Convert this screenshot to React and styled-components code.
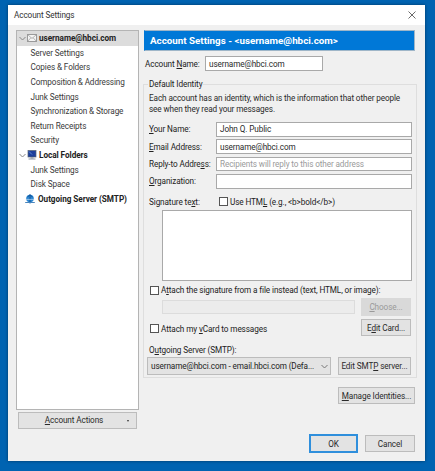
import React from 'react';
import styled, { createGlobalStyle } from 'styled-components';

const Global = createGlobalStyle`
  html, body { margin: 0; padding: 0; height: 100%; }
  body {
    background: #0063b1;
    font-family: Roboto, "Noto Sans", sans-serif;
    font-size: 8.2px;
    letter-spacing: -0.11px;
    color: #222;
    overflow: hidden;
  }
`;

const Desktop = styled.div`
  width: 435px;
  height: 471px;
  box-sizing: border-box;
  padding: 5px 10px 10px 8px;
`;

const Dialog = styled.div`
  width: 417px;
  height: 456px;
  display: flex;
  flex-direction: column;
  background: #f0f0f0;
  box-shadow: 0 0 3px rgba(0, 0, 0, 0.45);
`;

const TitleBar = styled.div`
  height: 20px;
  flex: none;
  display: flex;
  align-items: center;
  justify-content: space-between;
  padding: 0 9px 0 6px;
  background: #fff;
  color: #333;
`;

const Body = styled.div`
  flex: 1;
  display: flex;
  gap: 5px;
  padding: 5px 0 0 8px;
`;

const Side = styled.div`
  width: 123px;
  flex: none;
  display: flex;
  flex-direction: column;
`;

const Tree = styled.div`
  height: 380px;
  box-sizing: border-box;
  background: #fff;
  border: 1px solid #b4b4b4;
`;

const TreeRow = styled.div`
  height: 14.6px;
  display: flex;
  align-items: center;
  padding-left: ${p => (p.$child ? '13.5px' : '0')};
  background: ${p => (p.$selected ? '#dcdcdc' : 'transparent')};
  font-weight: ${p => (p.$root ? 700 : 400)};
  letter-spacing: ${p => (p.$root ? '-0.05px' : 'inherit')};
  color: ${p => (p.$root ? '#222' : '#3a3a3a')};
  white-space: nowrap;
`;

const Chevron = styled.svg`
  width: 7px;
  height: 5px;
  margin: 0 1px 0 2px;
  flex: none;
`;

const RootIcon = styled.svg`
  width: 10px;
  height: 10px;
  margin: ${p => (p.$flush ? '0 3px 0 8px' : '0 2px 0 0')};
  flex: none;
`;

const Button = styled.button`
  box-sizing: border-box;
  flex: none;
  padding: 0;
  width: ${p => p.$w}px;
  height: ${p => p.$h || 17}px;
  background: ${p => (p.$disabled ? '#d9d9d9' : '#e3e3e3')};
  border: 1px solid ${p => (p.$default ? '#2f8fdc' : p.$disabled ? '#d9d9d9' : '#bcbcbc')};
  outline: ${p => (p.$default ? '0.5px solid #2f8fdc' : 'none')};
  font: inherit;
  letter-spacing: inherit;
  color: ${p => (p.$disabled ? '#9a9a9a' : '#2a2a2a')};
  white-space: nowrap;
`;

const ActionsButton = styled(Button)`
  position: relative;
  margin: 2px 0 0 2px;
  padding-right: 7px;

  &::after {
    content: '';
    position: absolute;
    right: 7px;
    top: 6.5px;
    border: 1.5px solid transparent;
    border-top: 2px solid #333;
    border-bottom: 0;
  }
`;

const Main = styled.div`
  width: 273px;
  flex: none;
  display: flex;
  flex-direction: column;
`;

const Banner = styled.div`
  width: 271px;
  height: 21px;
  box-sizing: border-box;
  padding-left: 5px;
  display: flex;
  align-items: center;
  background: #0078d7;
  border: 1px solid #9fb6c8;
  border-left-color: #0078d7;
  color: #fff;
  font-size: 9.8px;
  font-weight: 700;
  letter-spacing: 0;
`;

const NameRow = styled.div`
  display: flex;
  align-items: center;
  margin: 5px 0 0 1px;
`;

const NameLabel = styled.label`
  width: 60px;
  flex: none;
`;

const Input = styled.div`
  box-sizing: border-box;
  height: ${p => p.$h || 14.6}px;
  width: ${p => (p.$w ? `${p.$w}px` : 'auto')};
  display: flex;
  align-items: center;
  padding-left: 3px;
  background: ${p => (p.$disabled ? '#ececec' : '#fff')};
  border: 1px solid ${p => (p.$disabled ? '#dcdcdc' : '#a9a9a9')};
  color: ${p => (p.$hint ? '#9a9a9a' : '#2a2a2a')};
`;

const Group = styled.fieldset`
  box-sizing: border-box;
  width: 274px;
  height: 299px;
  margin: 8px 0 0 -1px;
  padding: 0 5px 0 5px;
  border: 1px solid #dedede;
  min-width: 0;
`;

const Legend = styled.legend`
  padding: 0 1px;
  margin-left: -1px;
  line-height: 10px;
`;

const Intro = styled.p`
  margin: 4px 0 0;
  line-height: 11.3px;
  white-space: nowrap;
  color: #2a2a2a;
`;

const Fields = styled.div`
  display: grid;
  grid-template-columns: 67px 196px;
  grid-auto-rows: 14.6px;
  row-gap: 2.7px;
  align-items: center;
  margin-top: 6.5px;
  white-space: nowrap;
`;

const SigHead = styled.div`
  display: flex;
  align-items: center;
  height: 12px;
  margin-top: 7px;
`;

const SigLabel = styled.span`
  width: 70px;
  flex: none;
`;

const Check = styled.span`
  width: 9px;
  height: 9px;
  box-sizing: border-box;
  flex: none;
  margin-right: 2px;
  background: #fff;
  border: 1px solid #555;
`;

const SigBox = styled.div`
  box-sizing: border-box;
  width: 250px;
  height: 71px;
  margin: 2.5px 0 0 13px;
  background: #fff;
  border: 1px solid #a9a9a9;
`;

const CheckRow = styled.div`
  display: flex;
  align-items: center;
  height: 12px;
  margin: 3px 0 0 1px;
`;

const FileRow = styled.div`
  display: flex;
  align-items: center;
  justify-content: space-between;
  width: 249px;
  margin: 2px 0 0 13px;
`;

const CardRow = styled.div`
  display: flex;
  align-items: center;
  justify-content: space-between;
  width: 261px;
  margin: 3px 0 0 1px;
  height: 17px;
`;

const CardCheck = styled.div`
  display: flex;
  align-items: center;
  margin-top: 2px;
`;

const ServerLabel = styled.div`
  margin-top: 8px;
  height: 12px;
  line-height: 12px;
`;

const ServerRow = styled.div`
  display: flex;
  align-items: center;
  justify-content: space-between;
  width: 264px;
  margin: 1px 0 0 -2px;
`;

const Select = styled.div`
  box-sizing: border-box;
  width: 184px;
  height: 18px;
  display: flex;
  align-items: center;
  justify-content: space-between;
  padding: 0 1px 0 3px;
  background: #e3e3e3;
  border: 1px solid #bcbcbc;
  white-space: nowrap;
`;

const ManageRow = styled.div`
  display: flex;
  justify-content: flex-end;
  width: 271px;
  margin-top: 9px;
`;

const Footer = styled.div`
  display: flex;
  justify-content: flex-end;
  gap: 8px;
  width: 271px;
  margin-top: 31px;
`;

const K = styled.span`
  text-decoration: underline;
`;

const Arrow = () => (
  <Chevron viewBox="0 0 7 5"><path d="M.5 1l3 3 3-3" fill="none" stroke="#888" /></Chevron>
);

const MailIcon = () => (
  <RootIcon viewBox="0 0 10 10">
    <rect x=".5" y="1.5" width="9" height="7" fill="#f4f4f4" stroke="#9a9a9a" />
    <path d="M.5 1.5L5 5.5l4.5-4M.5 8.5L4 4.6M9.5 8.5L6 4.6" fill="none" stroke="#9a9a9a" strokeWidth=".7" />
  </RootIcon>
);

const ComputerIcon = () => (
  <RootIcon viewBox="0 0 10 10">
    <rect x="1" y=".5" width="8" height="6.5" fill="#1d3f9c" stroke="#5a6472" strokeWidth=".7" />
    <path d="M2 1.5l3 3" stroke="#6f9ae0" strokeWidth=".8" />
    <path d="M3.5 7.5h3v1h-3z" fill="#7b8491" />
    <path d="M1.5 9h7" stroke="#8d96a3" />
  </RootIcon>
);

const ServerIcon = () => (
  <RootIcon $flush viewBox="0 0 10 10">
    <circle cx="5" cy="4.6" r="3.8" fill="#2c86d1" />
    <path d="M5 .5v9M2.5 3.2L5 .7l2.5 2.5" fill="none" stroke="#0d4f94" strokeWidth=".9" />
    <path d="M.2 8.5h9.6" stroke="#4a86bd" strokeWidth="1" />
    <path d="M.8 5.4h8.4" stroke="#bcd8f0" strokeWidth=".7" />
  </RootIcon>
);

const Close = () => (
  <svg width="8" height="8" viewBox="0 0 8 8">
    <path d="M.5.5l7 7M7.5.5l-7 7" stroke="#444" strokeWidth=".8" />
  </svg>
);

const Account = () => (
  <>
    <TreeRow $root $selected><Arrow /><MailIcon />username@hbci.com</TreeRow>
    <TreeRow $child>Server Settings</TreeRow>
    <TreeRow $child>Copies &amp; Folders</TreeRow>
    <TreeRow $child>Composition &amp; Addressing</TreeRow>
    <TreeRow $child>Junk Settings</TreeRow>
    <TreeRow $child>Synchronization &amp; Storage</TreeRow>
    <TreeRow $child>Return Receipts</TreeRow>
    <TreeRow $child>Security</TreeRow>
    <TreeRow $root><Arrow /><ComputerIcon />Local Folders</TreeRow>
    <TreeRow $child>Junk Settings</TreeRow>
    <TreeRow $child>Disk Space</TreeRow>
    <TreeRow $root><ServerIcon />Outgoing Server (SMTP)</TreeRow>
  </>
);

export default function App() {
  return (
    <Desktop>
      <Global />
      <Dialog>
        <TitleBar>Account Settings<Close /></TitleBar>
        <Body>
          <Side>
            <Tree><Account /></Tree>
            <ActionsButton $w={119} $h={16.5}><K>A</K>ccount Actions</ActionsButton>
          </Side>
          <Main>
            <Banner>Account Settings - &lt;username@hbci.com&gt;</Banner>
            <NameRow>
              <NameLabel>Account <K>N</K>ame:</NameLabel>
              <Input $w={118} $h={15}>username@hbci.com</Input>
            </NameRow>
            <Group>
              <Legend>Default Identity</Legend>
              <Intro>
                Each account has an identity, which is the information that other people<br />
                see when they read your messages.
              </Intro>
              <Fields>
                <label><K>Y</K>our Name:</label>
                <Input>John Q. Public</Input>
                <label><K>E</K>mail Address:</label>
                <Input>username@hbci.com</Input>
                <label>Reply-to Addre<K>s</K>s:</label>
                <Input $hint>Recipients will reply to this other address</Input>
                <label><K>O</K>rganization:</label>
                <Input />
              </Fields>
              <SigHead>
                <SigLabel>Signature te<K>x</K>t:</SigLabel>
                <Check /><span>Use HTM<K>L</K> (e.g., &lt;b&gt;bold&lt;/b&gt;)</span>
              </SigHead>
              <SigBox />
              <CheckRow>
                <Check /><span>A<K>t</K>tach the signature from a file instead (text, HTML, or image):</span>
              </CheckRow>
              <FileRow>
                <Input $disabled $w={193} />
                <Button $w={50} $h={18} $disabled><K>C</K>hoose...</Button>
              </FileRow>
              <CardRow>
                <CardCheck><Check /><span>Attach my <K>v</K>Card to messages</span></CardCheck>
                <Button $w={50}>E<K>d</K>it Card...</Button>
              </CardRow>
              <ServerLabel>O<K>u</K>tgoing Server (SMTP):</ServerLabel>
              <ServerRow>
                <Select>
                  username@hbci.com - email.hbci.com (Defa...
                  <Chevron viewBox="0 0 7 5"><path d="M.5 1l3 3 3-3" fill="none" stroke="#777" /></Chevron>
                </Select>
                <Button $w={73} $h={18}>Edit SMT<K>P</K> server...</Button>
              </ServerRow>
            </Group>
            <ManageRow>
              <Button $w={77}><K>M</K>anage Identities...</Button>
            </ManageRow>
            <Footer>
              <Button $w={47} $default>OK</Button>
              <Button $w={50}>Cancel</Button>
            </Footer>
          </Main>
        </Body>
      </Dialog>
    </Desktop>
  );
}
